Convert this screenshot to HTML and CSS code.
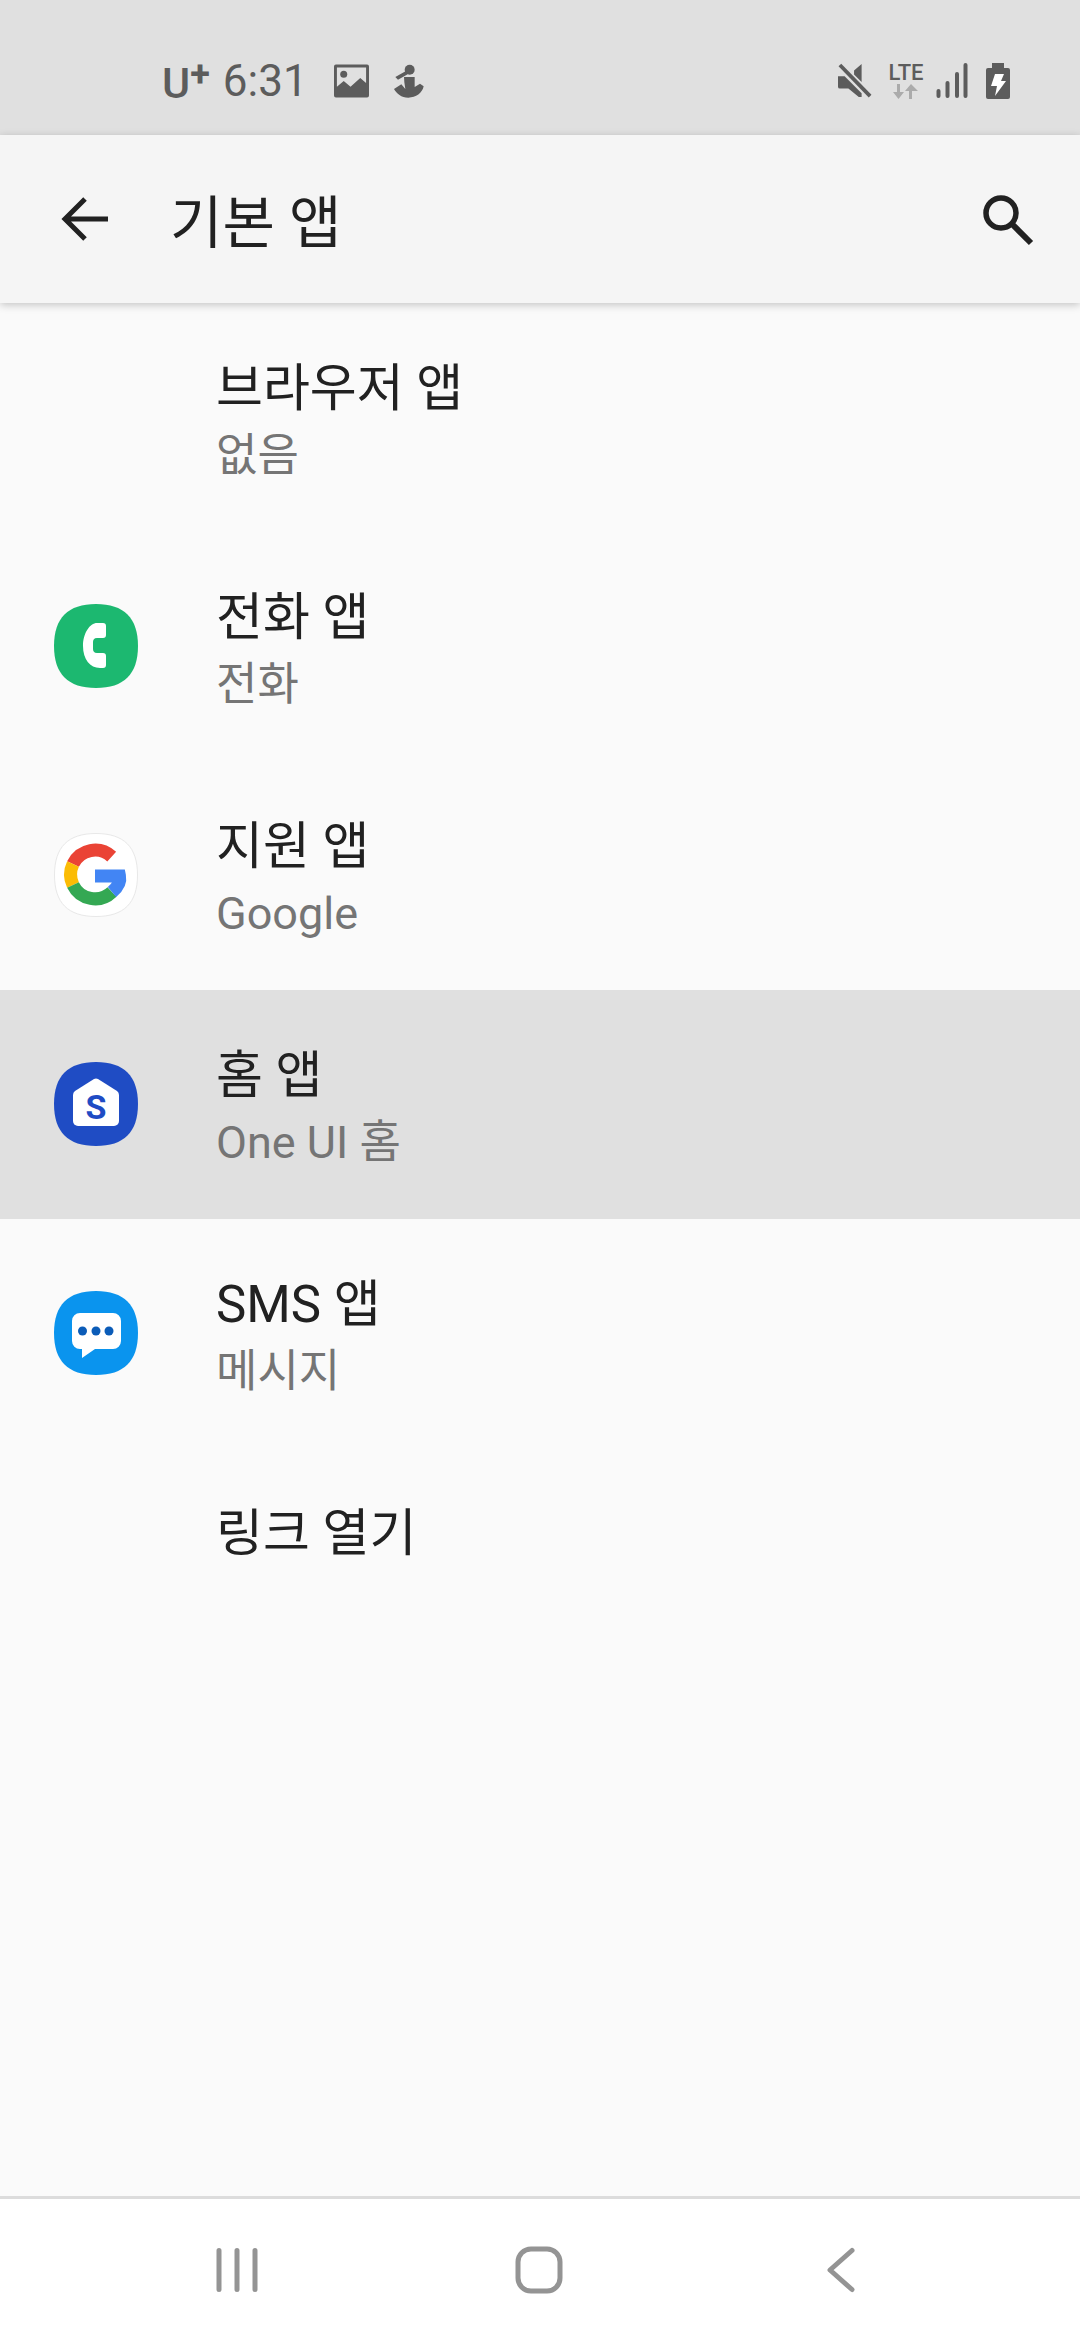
FILE: index.html
```html
<!DOCTYPE html>
<html lang="ko">
<head>
    <meta charset="UTF-8">
    <meta name="viewport" content="width=device-width, initial-scale=1.0">
    <title>기본 앱</title>
    <link rel="stylesheet" href="styles.css">
</head>
<body>
<div class="phone">
    <div class="status">
        <div class="status-left">
            <span class="carrier">U<span class="plus">+</span></span>
            <span class="time">6:31</span>
            <svg class="ic-pic" width="35" height="34" viewBox="0 0 36 34"><path fill="#5c5c5c" fill-rule="evenodd" d="M2 0h32a2 2 0 0 1 2 2v30a2 2 0 0 1-2 2H2a2 2 0 0 1-2-2V2a2 2 0 0 1 2-2zM3 3v20l7-6 7 6 10-9 6 5V3z"/><circle cx="10" cy="10" r="3.600" fill="#5c5c5c"/></svg>
            <svg class="ic-run" width="30" height="34" viewBox="0 0 90 100"><circle cx="47" cy="16" r="15" fill="#5c5c5c"/><path fill="#5c5c5c" d="M36 20l5 10L12 46 4 38zM30 38h32v30l16-10 11 8C85 86 66 100 43 100 22 100 8 88 0 74l22-14 12 14-3-20z"/></svg>
        </div>
        <div class="status-right">
            <svg class="ic-mute" width="34" height="36" viewBox="0 0 36 38"><path fill="#5c5c5c" d="M0 14h7l18 18v4h-3L11 27H2a2 2 0 0 1-2-2zM17 8l8-7v19l-8-8z"/><path stroke="#5c5c5c" stroke-width="4" d="M2 2l32 33"/></svg>
            <span class="lte">LTE<svg class="lte-arrows" width="26" height="16" viewBox="0 0 26 16"><path fill="#ababab" d="M4 1h3v8h4l-5.500 7L0 9h4zM19 16h-3V8h-4l6-7 7 7h-6z"/></svg></span>
            <svg class="ic-signal" width="32" height="36" viewBox="0 0 32 36"><g stroke="#5c5c5c" stroke-width="4" stroke-linecap="round"><path d="M2.500 28v5M11.500 20v13M21 11v22M29.500 2v31"/></g></svg>
            <svg class="ic-batt" width="24" height="36" viewBox="0 0 24 36"><path fill="#5c5c5c" d="M6 0h12v5h4a2 2 0 0 1 2 2v27a2 2 0 0 1-2 2H2a2 2 0 0 1-2-2V7a2 2 0 0 1 2-2h4z"/><path fill="#fff" d="M9 11h9l-3 7h5L9 33l2-10H5z"/></svg>
        </div>
    </div>

    <div class="appbar">
        <svg class="back" width="48" height="48" viewBox="0 0 48 48"><path fill="none" stroke="#212121" stroke-width="5" d="M48 24H5M25 4L5 24l20 20"/></svg>
        <div class="appbar-title">기본 앱</div>
        <svg class="search" width="54" height="54" viewBox="0 0 54 54"><circle cx="21" cy="21" r="15" fill="none" stroke="#212121" stroke-width="5.500"/><path stroke="#212121" stroke-width="6" d="M32 32l19 19"/></svg>
    </div>

    <ul class="list">
        <li class="row">
            <div class="icon"></div>
            <div><div class="title">브라우저 앱</div><div class="sub">없음</div></div>
        </li>
        <li class="row">
            <div class="icon">
                <svg width="84" height="84" viewBox="0 0 84 84"><path fill="#1cb870" d="M42 0C70 0 84 14 84 42S70 84 42 84 0 70 0 42 14 0 42 0z"/><path fill="#fff" d="M43 19h6c2 0 3 1 3 3v9c0 2-1 3-3 3h-6c-3 0-4 2-4 4v7c0 2 1 4 4 4h6c2 0 3 1 3 3v9c0 2-1 3-3 3h-3c-10 0-17-9-17-22s7-23 14-23z"/></svg>
            </div>
            <div><div class="title">전화 앱</div><div class="sub">전화</div></div>
        </li>
        <li class="row">
            <div class="icon">
                <svg width="84" height="84" viewBox="0 0 84 84"><path fill="#fff" stroke="#e8e8e8" stroke-width="1" d="M42 .5C70 .5 83.500 14 83.500 42S70 83.500 42 83.500.5 70 .5 42 14 .5 42 .5z"/><g fill="none" stroke-width="13"><path stroke="#ea4335" d="M57.700 23.600A24.500 24.500 0 0 0 19 31"/><path stroke="#fbbc05" d="M19 31a24.500 24.500 0 0 0 0 21"/><path stroke="#34a853" d="M19 52A24.500 24.500 0 0 0 58 59"/><path stroke="#4285f4" d="M58 59c6-5 8.500-11 7.500-16H41"/></g></svg>
            </div>
            <div><div class="title">지원 앱</div><div class="sub">Google</div></div>
        </li>
        <li class="row row-active">
            <div class="icon">
                <svg width="84" height="84" viewBox="0 0 84 84"><path fill="#1f4cc4" d="M42 0C70 0 84 14 84 42S70 84 42 84 0 70 0 42 14 0 42 0z"/><path fill="#fff" d="M40 17a4 4 0 0 1 4 0l19 12a5 5 0 0 1 2 4v26a5 5 0 0 1-5 5H24a5 5 0 0 1-5-5V33a5 5 0 0 1 2-4z"/><text x="42" y="57" class="s-mark">S</text></svg>
            </div>
            <div><div class="title">홈 앱</div><div class="sub">One UI 홈</div></div>
        </li>
        <li class="row">
            <div class="icon">
                <svg width="84" height="84" viewBox="0 0 84 84"><path fill="#0a94ee" d="M42 0C70 0 84 14 84 42S70 84 42 84 0 70 0 42 14 0 42 0z"/><path fill="#fff" d="M26 22h33a8 8 0 0 1 8 8v20a8 8 0 0 1-8 8H41L28 67v-9h-2a8 8 0 0 1-8-8V30a8 8 0 0 1 8-8z"/><circle cx="28.500" cy="40" r="4.500" fill="#0b5cb8"/><circle cx="42" cy="40" r="4.500" fill="#0b5cb8"/><circle cx="55" cy="40" r="4.500" fill="#0b5cb8"/></svg>
            </div>
            <div><div class="title">SMS 앱</div><div class="sub">메시지</div></div>
        </li>
        <li class="row">
            <div class="icon"></div>
            <div><div class="title">링크 열기</div></div>
        </li>
    </ul>

    <div class="nav">
        <svg width="48" height="48" viewBox="0 0 48 48"><g stroke="#949494" stroke-width="5" stroke-linecap="round"><path d="M6 4.500v39M24 4.500v39M42 4.500v39"/></g></svg>
        <svg width="48" height="48" viewBox="0 0 48 48"><rect x="3" y="3" width="42" height="42" rx="13" fill="none" stroke="#949494" stroke-width="5"/></svg>
        <svg width="48" height="48" viewBox="0 0 48 48"><path fill="none" stroke="#949494" stroke-width="5" stroke-linecap="round" stroke-linejoin="round" d="M35 4.500L13 24l22 19.500"/></svg>
    </div>
</div>
</body>
</html>
```

FILE: styles.css
```css
body,ul,li{
    margin:0;
    padding:0;
    list-style:none;
}
body{
    font-family:Roboto,"Noto Sans CJK KR",sans-serif;
    background:#fafafa;
}
.phone{
    width:1080px;
    height:2340px;
    display:flex;
    flex-direction:column;
    overflow:hidden;
}

.status{
    height:135px;
    box-sizing:border-box;
    background:#e0e0e0;
    display:flex;
    align-items:center;
    justify-content:space-between;
    padding:27px 70px 0 162px;
    color:#5c5c5c;
    flex-shrink:0;
}
.status-left,.status-right{
    display:flex;
    align-items:center;
}
.carrier{
    font-size:43px;
    font-weight:500;
    line-height:50px;
    margin-top:6px;
}
.plus{
    font-size:36px;
    font-weight:700;
    position:relative;
    top:-12px;
}
.time{
    font-size:44px;
    margin-left:13px;
}
.ic-pic{
    margin-left:26px;
}
.ic-run{
    margin-left:25px;
}
.lte{
    display:flex;
    flex-direction:column;
    align-items:center;
    font-size:22px;
    font-weight:500;
    line-height:20px;
    width:36px;
    margin-left:16px;
}
.ic-signal{
    margin-left:12px;
}
.ic-batt{
    margin-left:18px;
}

.appbar{
    height:168px;
    background:#f5f5f5;
    display:flex;
    align-items:center;
    padding:0 46px 0 60px;
    box-shadow:0 2px 8px rgba(0,0,0,.22);
    position:relative;
    flex-shrink:0;
}
.appbar-title{
    flex:1;
    margin-left:62px;
    margin-bottom:3px;
    font-size:57px;
    color:#212121;
}

.list{
    flex:1;
}
.row{
    height:229px;
    display:flex;
    align-items:flex-start;
    box-sizing:border-box;
    padding:0 0 0 54px;
}
.row-active{
    background:#e0e0e0;
}
.icon{
    width:84px;
    height:84px;
    margin-top:72px;
    margin-right:78px;
    flex-shrink:0;
}
.title{
    font-size:51px;
    line-height:62px;
    margin-top:55px;
    color:#212121;
}
.sub{
    font-size:45px;
    line-height:54px;
    margin-top:9px;
    color:#757575;
}
.s-mark{
    font-family:Roboto,sans-serif;
    font-size:34px;
    font-weight:700;
    fill:#1f4cc4;
    text-anchor:middle;
}

.nav{
    height:141px;
    background:#fff;
    border-top:3px solid #dcdcdc;
    display:flex;
    align-items:center;
    gap:254px;
    padding-left:213px;
    flex-shrink:0;
}
```
